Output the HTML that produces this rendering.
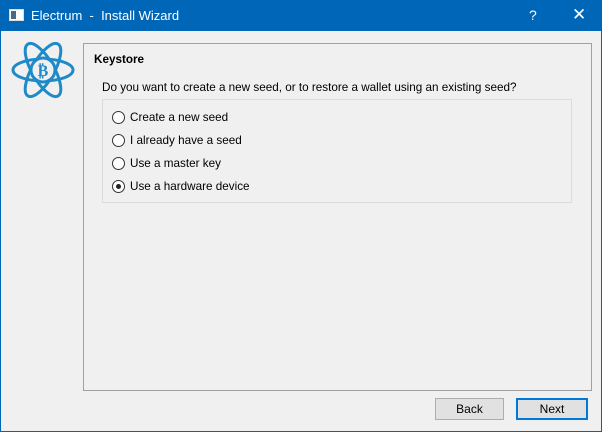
<!DOCTYPE html>
<html><head><style>
*{margin:0;padding:0;box-sizing:border-box}
body{width:602px;height:432px;background:#0067b8;font-family:"Liberation Sans",sans-serif;font-size:11.7px;color:#000;position:relative;overflow:hidden}
.title{position:absolute;left:0;top:0;width:602px;height:31px;background:#0067b8;color:#fff;font-size:13px}
.client{position:absolute;left:1px;top:31px;width:600px;height:400px;background:#f0f0f0}
.abs{position:absolute}
.radio{position:absolute;width:13px;height:13px;border:1px solid #333;border-radius:50%;background:#fff}
.btn{position:absolute;height:22px;border:1px solid #adadad;background:#e1e1e1;text-align:center;line-height:20px;font-size:12px}
</style></head><body>
<div class="title">
 <div class="abs" style="left:9px;top:9px;width:15px;height:12px;background:#fff;border:1px solid #ddd"></div>
 <div class="abs" style="left:11px;top:11px;width:5px;height:8px;background:#4a6a88"></div>
 <div class="abs" style="left:31px;top:8px">Electrum &nbsp;- &nbsp;Install Wizard</div>
 <div class="abs" style="left:529px;top:7px;font-size:14px">?</div>
 <div class="abs" style="left:572px;top:5px;font-size:17px">✕</div>
</div>
<div class="client">
 <svg class="abs" style="left:9px;top:6px" width="66" height="66" viewBox="0 0 66 66">
  <g fill="none" stroke="#1e8ac8" stroke-width="3">
   <ellipse cx="33" cy="33" rx="30" ry="11"/>
   <ellipse cx="33" cy="33" rx="30" ry="11" transform="rotate(60 33 33)"/>
   <ellipse cx="33" cy="33" rx="30" ry="11" transform="rotate(-60 33 33)"/>
  </g>
  <circle cx="33" cy="33" r="12" fill="#f0f0f0" stroke="#1e8ac8" stroke-width="3"/>
  <text x="33" y="39" fill="#1e8ac8" font-size="16" font-weight="bold" text-anchor="middle" font-family="DejaVu Sans">₿</text>
 </svg>
 <div class="abs" style="left:82px;top:12px;width:509px;height:348px;border:1px solid #a0a0a0"></div>
 <div class="abs" style="left:93px;top:22px;font-weight:bold">Keystore</div>
 <div class="abs" style="left:101px;top:50px">Do you want to create a new seed, or to restore a wallet using an existing seed?</div>
 <div class="abs" style="left:101px;top:68px;width:470px;height:104px;border:1px solid #dcdcdc"></div>
 <div class="radio" style="left:111px;top:80px"></div><div class="abs" style="left:129px;top:80px">Create a new seed</div>
 <div class="radio" style="left:111px;top:103px"></div><div class="abs" style="left:129px;top:103px">I already have a seed</div>
 <div class="radio" style="left:111px;top:126px"></div><div class="abs" style="left:129px;top:126px">Use a master key</div>
 <div class="radio" style="left:111px;top:149px"></div><div class="abs" style="left:115px;top:153px;width:5px;height:5px;border-radius:50%;background:#222"></div><div class="abs" style="left:129px;top:149px">Use a hardware device</div>
 <div class="btn" style="left:434px;top:367px;width:69px">Back</div>
 <div class="btn" style="left:515px;top:367px;width:72px;border:2px solid #0078d7;line-height:18px">Next</div>
</div>
</body></html>
